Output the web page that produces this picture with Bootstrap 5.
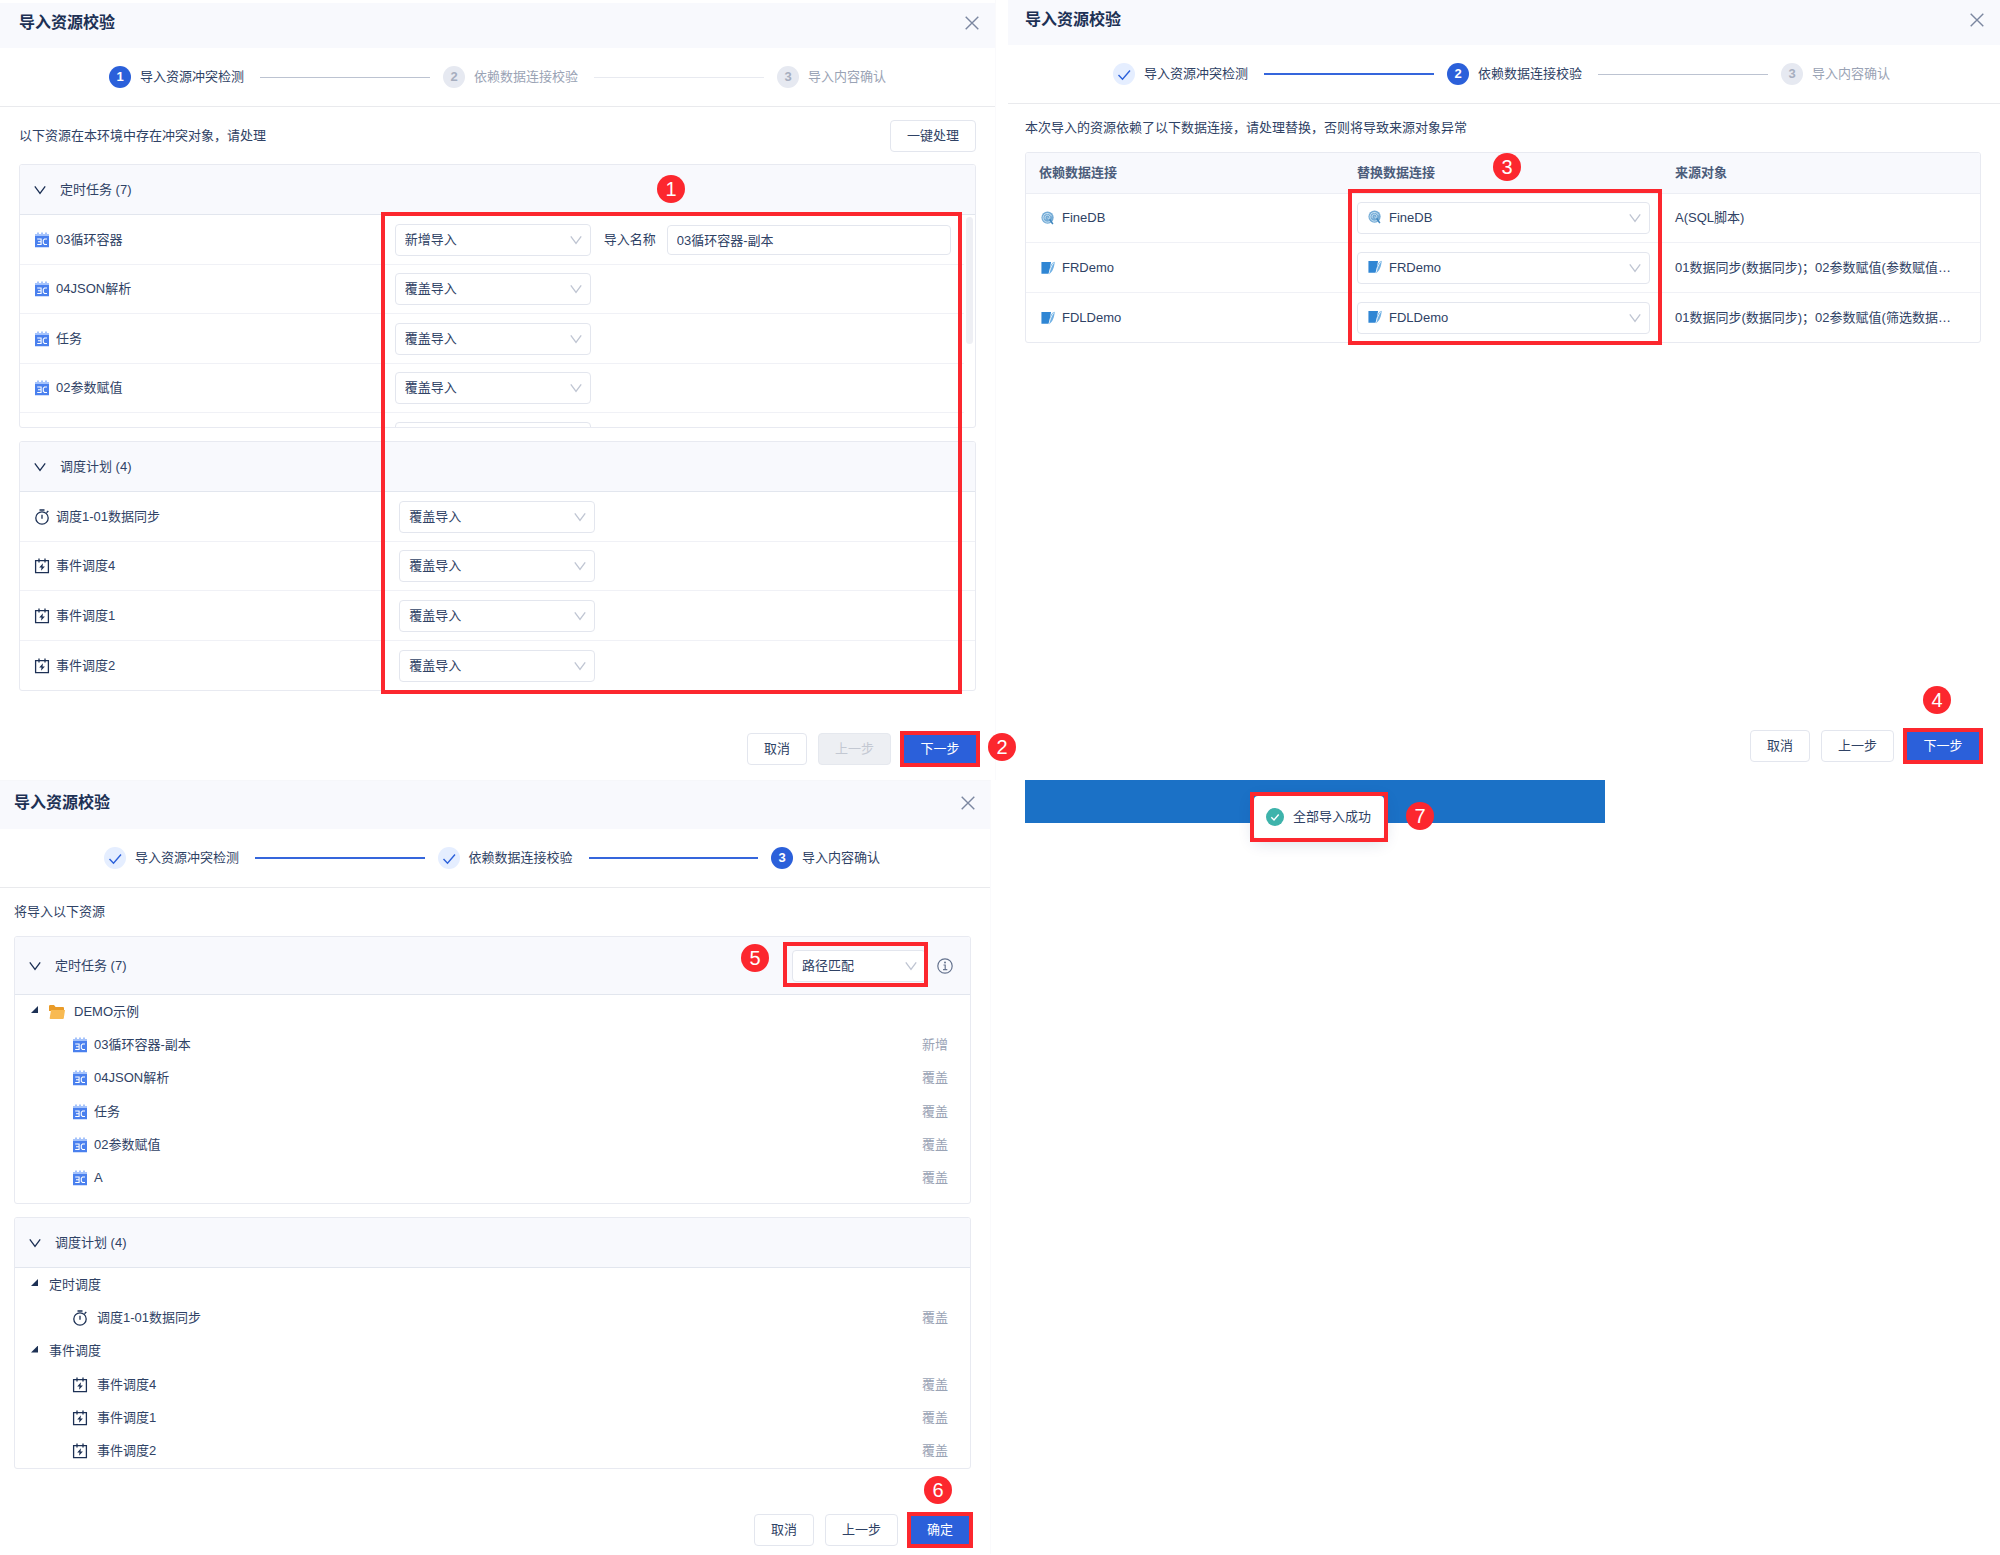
<!DOCTYPE html>
<html lang="zh-CN">
<head>
<meta charset="utf-8">
<meta name="viewport" content="width=device-width, initial-scale=1">
<title>导入资源校验</title>
<link rel="stylesheet" href="https://cdn.jsdelivr.net/npm/bootstrap@5.3.0/dist/css/bootstrap.min.css">
<style>
:root{--ink:#2f4265;--deep:#1d3155;--mute:#9aa3b5;--line:#e8eaf1;--accent:#2b60da;--flag:#fc272e;--tint:#f8f9fd}
body{font-family:"Liberation Sans","Noto Sans CJK SC",sans-serif;font-size:13px;line-height:20px;color:var(--ink);background:#fff}
.board{display:grid;grid-template-columns:1008fr 992fr}
.dialog-a{margin-right:12px;border-right:1px solid #fafafc;--pl:19px;--pr:19px;padding-top:3px}
.dialog-b{--pl:17px;--pr:19px}
.dialog-c{margin-right:17px;border-right:1px solid #fafafc;--pl:14px;--pr:19px;border-top:1px solid #f6f7fa}
.dlg-head{height:45px;background:var(--tint);padding:0 16px 5px var(--pl)}
.dialog-b .dlg-head{padding-right:16px}
.dialog-c .dlg-head{height:48px;padding:3px 15px 7px var(--pl)}
.dlg-title{font-size:16px;font-weight:700;color:var(--deep);margin:0;line-height:20px}
.close-x{border:0;background:none;padding:0;width:14px;height:14px;line-height:0;color:#7b87a0}
.steps{height:59px;border-bottom:1px solid #e9eaed;padding:0 107px 0 109px}
.dialog-b .steps{padding:0 108px 0 105px}
.dialog-c .steps{padding:0 108px 0 104px}
.dot{width:22px;height:22px;border-radius:50%;font-weight:700;line-height:22px;text-align:center;flex:none;background:#e6e9f1;color:#a6aebf}
.dot-on{background:var(--accent);color:#fff}
.dot-ok{background:#e5eeff;color:var(--accent)}
.step-name{width:107px;margin-left:9px;flex:none}
.step-last{width:80px}
.off{color:var(--mute)}
.bar{height:1px;flex:1;margin:0 13px;background:#bcc3d1}
.bar-pale{background:#e8eaf0}
.bar-done{height:2px;background:#3566dc}
.dlg-body{padding:0 var(--pr) 0 var(--pl)}
.box{border:1px solid var(--line);border-radius:3px;background:#fff;overflow:hidden}
.box-head{height:50px;background:var(--tint);border-bottom:1px solid #e2e6ee;padding:0 14px;gap:14px}
.fold{border:0;background:none;padding:0;width:12px;height:12px;line-height:0;color:var(--deep);flex:none}
.line-row{height:50px;border-bottom:1px solid #f0f1f6}
.line-row:nth-child(even){height:49px}
.line-row:last-child{border-bottom:0}
.row-name{flex:0 0 39.7%;padding-left:14px;gap:6px}
.viewport-list{height:212px;overflow:hidden}
.thumb{width:7px;height:127px;border-radius:4px;background:#eeeff4;margin:2px 2px 0}
.pick{appearance:none;width:196px;height:32px;border:1px solid #e3e6ee;border-radius:4px;background:#fff;color:var(--ink);padding:0 28px 0 9px;font-size:13px;line-height:20px;display:block}
.pick-wrap{position:relative}
.pick-wrap .caret{position:absolute;right:9px;top:10px;width:12px;height:12px;color:#bfc5d2;pointer-events:none}
.pick-wrap .lead-ic{position:absolute;left:11px;top:8px;pointer-events:none}
.pick-wide{width:100%;padding-left:31px}
.pick-path{width:134px}
.name-box{height:30px;border:1px solid #e3e6ee;border-radius:4px;color:var(--ink);padding:0 9px;font-size:13px;min-width:0}
.act{height:32px;border:1px solid #e3e6ee;border-radius:4px;background:#fff;color:var(--ink);font-size:13px;line-height:20px;padding:0 16px;min-width:60px}
.act-3{min-width:73px}
.act:disabled{background:#edeff3;color:#c3c8d2;border-color:#e5e8ee;opacity:1}
.act-go{background:var(--accent);border:0;color:#fff;border-radius:0;display:block;min-width:58px}
.act-go.act-3{min-width:72px}
.go-wrap{position:relative;margin-left:2px}
.foot{gap:11px}
.flag-box{position:absolute;border:4px solid var(--flag);pointer-events:none}
.flag-num{position:absolute;width:28px;height:28px;border-radius:50%;background:var(--flag);color:#fff;font-size:20px;line-height:28px;text-align:center}
.go-wrap .flag-box{inset:-2px -4px}
.deps{width:100%;table-layout:fixed;margin:0;border-collapse:separate;border-spacing:0}
.deps th{height:41px;background:var(--tint);color:#4c5d7b;font-weight:700;border-bottom:1px solid #eceef4;padding:0 13px}
.deps td{height:49px;border-bottom:1px solid #f0f1f6;padding:0 13px}
.deps tbody tr:nth-child(even) td{height:50px}
.deps tbody tr:last-child td{border-bottom:0}
.src{gap:7px;padding-left:2px}
.deps .col-pick{padding:0 12px 0 13px}
.tree{list-style:none;margin:0;padding:0}
.tree li{height:33px;display:flex;align-items:center;padding:0 22px 0 57px}
.tree li:nth-child(3n){height:34px}
.tree .branch{padding-left:16px}
.tri{width:7px;height:7px;background:var(--deep);clip-path:polygon(100% 0,100% 100%,0 100%);margin:-4px 11px 0 0;flex:none}
.state{margin-left:auto;color:var(--mute)}
.strip{height:43px;background:#1b71c6;margin-left:17px;width:580px;position:relative}
.toast-ok{position:absolute;left:229px;top:16px;width:130px;height:42px;background:#fff;border-radius:4px;box-shadow:0 4px 16px rgba(20,50,110,.18);gap:9px;padding-left:12px}
.i16{width:16px;height:16px;flex:none}
.ic-near{margin-right:6px}
.ic-far{margin-right:9px}
svg{flex:none}
</style>
<script src="https://cdn.jsdelivr.net/npm/bootstrap@5.3.0/dist/js/bootstrap.bundle.min.js"></script>
</head>
<body>
<svg class="d-none" aria-hidden="true">
  <symbol id="x" viewBox="0 0 14 14"><path d="M.7.7l12.6 12.6M13.3.7L.7 13.3" fill="none" stroke="currentColor" stroke-width="1.4"/></symbol>
  <symbol id="down" viewBox="0 0 12 12"><path d="M.8 2.300L6 9.300l5.200-7" fill="none" stroke="currentColor" stroke-width="1.300"/></symbol>
  <symbol id="tick" viewBox="0 0 22 22"><path d="M5.500 12l4 4.200L17 7.500" fill="none" stroke="currentColor" stroke-width="1.400"/></symbol>
  <symbol id="task" viewBox="0 0 16 16"><path d="M1 2h2V.5h2V2h2V.5h2V2h2V.5h2V2h2v3H1z" fill="#a5c3fb"/><path d="M1 4h14v11.200H1z" fill="#4a80ee"/><path d="M3.200 7h3.900v5.500H3.200M4 9.750h3.100M13 7H10.500L9.300 8.200v3.100l1.200 1.200H13" fill="none" stroke="#fff" stroke-width="1.100"/></symbol>
  <symbol id="clock" viewBox="0 0 16 16"><circle cx="8" cy="9" r="6.200" fill="none" stroke="#1d3155" stroke-width="1.300"/><path d="M5.500 1h5M8 5.800v4M12.500 3.800l1.800-1.800" fill="none" stroke="#1d3155" stroke-width="1.300"/></symbol>
  <symbol id="event" viewBox="0 0 16 16"><path d="M1.600 2.600h12.800v12H1.600z" fill="none" stroke="#1d3155" stroke-width="1.300"/><path d="M5 .5v4M11 .5v4" stroke="#1d3155" stroke-width="1.300"/><path d="M9 5.300L5.200 9.400h2.300L7 12.800l3.900-4.300H8.500z" fill="#1d3155"/></symbol>
  <symbol id="fine" viewBox="0 0 16 16"><circle cx="7.500" cy="7.500" r="7" fill="#74abd6"/><path d="M11.500 10.500A5 5 0 1 1 12 6M5.500 9.500a2.700 2.700 0 1 1 4.500-2.200c0 2-2.500 2.200-2.300.2" fill="none" stroke="#d4e9f7" stroke-width="1"/><path d="M10 9.500l3.500 5.500" stroke="#3f86bd" stroke-width="1.800"/></symbol>
  <symbol id="book" viewBox="0 0 16 16"><path d="M.5 1.200h11L9 14.500H.5z" fill="#2f86d4"/><path d="M15.700.8c-4 1-5.200 5-5.700 9l-1 5.500c4.500-3 6.200-8.500 6.700-14.500z" fill="#6fb0e4"/><path d="M14.500 2C11.800 5.500 10.300 10 9 14.800" fill="none" stroke="#fff" stroke-width=".9"/></symbol>
  <symbol id="folder" viewBox="0 0 16 16"><path d="M0 2.200Q0 1 1.200 1H5l1.600 2H14q1 0 1 1v3H0z" fill="#e99b28"/><path d="M2 6h14l-1.200 8.200q-.1.800-1 .8H1.600Q.500 15 .700 14z" fill="#f8ba52"/></symbol>
  <symbol id="info" viewBox="0 0 16 16"><circle cx="8" cy="8" r="7.200" fill="none" stroke="#66748f" stroke-width="1.200"/><path d="M6.500 7h1.700v4.500M6 11.700h4.300" fill="none" stroke="#66748f" stroke-width="1.200"/><circle cx="8" cy="4.500" r="1" fill="#66748f"/></symbol>
  <symbol id="good" viewBox="0 0 18 18"><circle cx="9" cy="9" r="9" fill="#3eb3ab"/><path d="M5.300 9.200l2.700 2.800 4.700-5.500" fill="none" stroke="#fff" stroke-width="1.400"/></symbol>
</svg>

<main class="board">
  <section class="dialog-a">
    <header class="dlg-head d-flex align-items-center justify-content-between">
      <h1 class="dlg-title">导入资源校验</h1>
      <button class="close-x" type="button" aria-label="关闭"><svg width="14" height="14"><use href="#x"/></svg></button>
    </header>
    <div class="steps d-flex align-items-center">
      <span class="dot dot-on">1</span><span class="step-name">导入资源冲突检测</span><span class="bar"></span>
      <span class="dot">2</span><span class="step-name off">依赖数据连接校验</span><span class="bar bar-pale"></span>
      <span class="dot">3</span><span class="step-name step-last off">导入内容确认</span>
    </div>
    <div class="dlg-body" style="padding-top:13px">
      <div class="d-flex align-items-center justify-content-between" style="margin-bottom:12px">
        <span>以下资源在本环境中存在冲突对象，请处理</span>
        <button class="act" type="button">一键处理</button>
      </div>
      <div class="position-relative">
        <div class="box">
          <div class="box-head d-flex align-items-center"><button class="fold" type="button" aria-label="收起"><svg width="12" height="12"><use href="#down"/></svg></button><span>定时任务 (7)</span></div>
          <div class="viewport-list d-flex">
            <div class="flex-fill">
              <div class="line-row d-flex align-items-center">
                <div class="row-name d-flex align-items-center"><svg class="i16"><use href="#task"/></svg>03循环容器</div>
                <div class="pick-wrap"><select class="pick" aria-label="导入方式"><option>新增导入</option></select><svg class="caret"><use href="#down"/></svg></div>
                <label for="nm" style="margin:0 11px 0 13px">导入名称</label>
                <input id="nm" class="name-box flex-fill" value="03循环容器-副本" style="margin-right:13px">
              </div>
              <div class="line-row d-flex align-items-center">
                <div class="row-name d-flex align-items-center"><svg class="i16"><use href="#task"/></svg>04JSON解析</div>
                <div class="pick-wrap"><select class="pick" aria-label="导入方式"><option>覆盖导入</option></select><svg class="caret"><use href="#down"/></svg></div>
              </div>
              <div class="line-row d-flex align-items-center">
                <div class="row-name d-flex align-items-center"><svg class="i16"><use href="#task"/></svg>任务</div>
                <div class="pick-wrap"><select class="pick" aria-label="导入方式"><option>覆盖导入</option></select><svg class="caret"><use href="#down"/></svg></div>
              </div>
              <div class="line-row d-flex align-items-center">
                <div class="row-name d-flex align-items-center"><svg class="i16"><use href="#task"/></svg>02参数赋值</div>
                <div class="pick-wrap"><select class="pick" aria-label="导入方式"><option>覆盖导入</option></select><svg class="caret"><use href="#down"/></svg></div>
              </div>
              <div class="line-row d-flex align-items-center">
                <div class="row-name"></div>
                <div class="pick-wrap"><select class="pick" aria-label="导入方式"></select></div>
              </div>
            </div>
            <div class="thumb"></div>
          </div>
        </div>
        <div class="box" style="margin-top:13px">
          <div class="box-head d-flex align-items-center"><button class="fold" type="button" aria-label="收起"><svg width="12" height="12"><use href="#down"/></svg></button><span>调度计划 (4)</span></div>
          <div>
            <div class="line-row d-flex align-items-center">
              <div class="row-name d-flex align-items-center"><svg class="i16"><use href="#clock"/></svg>调度1-01数据同步</div>
              <div class="pick-wrap"><select class="pick" aria-label="导入方式"><option>覆盖导入</option></select><svg class="caret"><use href="#down"/></svg></div>
            </div>
            <div class="line-row d-flex align-items-center">
              <div class="row-name d-flex align-items-center"><svg class="i16"><use href="#event"/></svg>事件调度4</div>
              <div class="pick-wrap"><select class="pick" aria-label="导入方式"><option>覆盖导入</option></select><svg class="caret"><use href="#down"/></svg></div>
            </div>
            <div class="line-row d-flex align-items-center">
              <div class="row-name d-flex align-items-center"><svg class="i16"><use href="#event"/></svg>事件调度1</div>
              <div class="pick-wrap"><select class="pick" aria-label="导入方式"><option>覆盖导入</option></select><svg class="caret"><use href="#down"/></svg></div>
            </div>
            <div class="line-row d-flex align-items-center">
              <div class="row-name d-flex align-items-center"><svg class="i16"><use href="#event"/></svg>事件调度2</div>
              <div class="pick-wrap"><select class="pick" aria-label="导入方式"><option>覆盖导入</option></select><svg class="caret"><use href="#down"/></svg></div>
            </div>
          </div>
        </div>
        <div class="flag-box" style="left:362px;right:14px;top:48px;bottom:-3px"></div>
        <span class="flag-num" style="left:638px;top:11px">1</span>
      </div>
      <div class="foot d-flex justify-content-end" style="padding-top:42px;padding-bottom:15px">
        <button class="act" type="button">取消</button>
        <button class="act act-3" type="button" disabled>上一步</button>
        <div class="go-wrap"><button class="act act-3 act-go" type="button">下一步</button><div class="flag-box"></div><span class="flag-num" style="left:84px;top:0">2</span></div>
      </div>
    </div>
  </section>

  <section class="dialog-b d-flex flex-column">
    <header class="dlg-head d-flex align-items-center justify-content-between">
      <h1 class="dlg-title">导入资源校验</h1>
      <button class="close-x" type="button" aria-label="关闭"><svg width="14" height="14"><use href="#x"/></svg></button>
    </header>
    <div class="steps d-flex align-items-center">
      <span class="dot dot-ok"><svg class="d-block" width="22" height="22"><use href="#tick"/></svg></span><span class="step-name">导入资源冲突检测</span><span class="bar bar-done"></span>
      <span class="dot dot-on">2</span><span class="step-name">依赖数据连接校验</span><span class="bar"></span>
      <span class="dot">3</span><span class="step-name step-last off">导入内容确认</span>
    </div>
    <div class="dlg-body flex-fill d-flex flex-column" style="padding-top:14px">
      <span style="margin-bottom:14px">本次导入的资源依赖了以下数据连接，请处理替换，否则将导致来源对象异常</span>
      <div class="position-relative">
        <div class="box">
          <table class="deps">
            <thead><tr><th>依赖数据连接</th><th>替换数据连接</th><th>来源对象</th></tr></thead>
            <tbody>
              <tr><td><div class="src d-flex align-items-center"><svg width="14" height="14"><use href="#fine"/></svg>FineDB</div></td>
                <td class="col-pick"><div class="pick-wrap"><svg class="lead-ic" width="14" height="14"><use href="#fine"/></svg><select class="pick pick-wide" aria-label="替换数据连接"><option>FineDB</option></select><svg class="caret"><use href="#down"/></svg></div></td><td>A(SQL脚本)</td></tr>
              <tr><td><div class="src d-flex align-items-center"><svg width="14" height="14"><use href="#book"/></svg>FRDemo</div></td>
                <td class="col-pick"><div class="pick-wrap"><svg class="lead-ic" width="14" height="14"><use href="#book"/></svg><select class="pick pick-wide" aria-label="替换数据连接"><option>FRDemo</option></select><svg class="caret"><use href="#down"/></svg></div></td><td class="text-nowrap">01数据同步(数据同步)；02参数赋值(参数赋值…</td></tr>
              <tr><td><div class="src d-flex align-items-center"><svg width="14" height="14"><use href="#book"/></svg>FDLDemo</div></td>
                <td class="col-pick"><div class="pick-wrap"><svg class="lead-ic" width="14" height="14"><use href="#book"/></svg><select class="pick pick-wide" aria-label="替换数据连接"><option>FDLDemo</option></select><svg class="caret"><use href="#down"/></svg></div></td><td class="text-nowrap">01数据同步(数据同步)；02参数赋值(筛选数据…</td></tr>
            </tbody>
          </table>
        </div>
        <div class="flag-box" style="left:323px;right:319px;top:37px;bottom:-2px"></div>
        <span class="flag-num" style="left:468px;top:1px">3</span>
      </div>
      <div class="foot d-flex justify-content-end mt-auto" style="padding-bottom:18px;padding-right:2px">
        <button class="act" type="button">取消</button>
        <button class="act act-3" type="button">上一步</button>
        <div class="go-wrap"><button class="act act-3 act-go" type="button">下一步</button><div class="flag-box"></div><span class="flag-num" style="left:16px;top:-44px">4</span></div>
      </div>
    </div>
  </section>

  <section class="dialog-c">
    <header class="dlg-head d-flex align-items-center justify-content-between">
      <h1 class="dlg-title">导入资源校验</h1>
      <button class="close-x" type="button" aria-label="关闭"><svg width="14" height="14"><use href="#x"/></svg></button>
    </header>
    <div class="steps d-flex align-items-center">
      <span class="dot dot-ok"><svg class="d-block" width="22" height="22"><use href="#tick"/></svg></span><span class="step-name">导入资源冲突检测</span><span class="bar bar-done"></span>
      <span class="dot dot-ok"><svg class="d-block" width="22" height="22"><use href="#tick"/></svg></span><span class="step-name">依赖数据连接校验</span><span class="bar bar-done"></span>
      <span class="dot dot-on">3</span><span class="step-name step-last">导入内容确认</span>
    </div>
    <div class="dlg-body" style="padding-top:14px">
      <div style="margin-bottom:14px">将导入以下资源</div>
      <div class="box" style="padding-bottom:8px">
        <div class="box-head d-flex align-items-center" style="height:58px;padding-right:17px">
          <button class="fold" type="button" aria-label="收起"><svg width="12" height="12"><use href="#down"/></svg></button><span>定时任务 (7)</span>
          <div class="pick-wrap ms-auto"><select class="pick pick-path" aria-label="匹配方式"><option>路径匹配</option></select><svg class="caret"><use href="#down"/></svg>
            <div class="flag-box" style="inset:-8px -2px -5px -9px"></div><span class="flag-num" style="left:-51px;top:-6px">5</span></div>
          <svg class="i16" style="margin-left:-3px"><use href="#info"/></svg>
        </div>
        <ul class="tree">
          <li class="branch"><i class="tri"></i><svg class="i16 ic-far"><use href="#folder"/></svg>DEMO示例</li>
          <li><svg class="i16 ic-near"><use href="#task"/></svg>03循环容器-副本<span class="state">新增</span></li>
          <li><svg class="i16 ic-near"><use href="#task"/></svg>04JSON解析<span class="state">覆盖</span></li>
          <li><svg class="i16 ic-near"><use href="#task"/></svg>任务<span class="state">覆盖</span></li>
          <li><svg class="i16 ic-near"><use href="#task"/></svg>02参数赋值<span class="state">覆盖</span></li>
          <li><svg class="i16 ic-near"><use href="#task"/></svg>A<span class="state">覆盖</span></li>
        </ul>
      </div>
      <div class="box" style="margin-top:13px">
        <div class="box-head d-flex align-items-center"><button class="fold" type="button" aria-label="收起"><svg width="12" height="12"><use href="#down"/></svg></button><span>调度计划 (4)</span></div>
        <ul class="tree">
          <li class="branch"><i class="tri"></i>定时调度</li>
          <li><svg class="i16 ic-far"><use href="#clock"/></svg>调度1-01数据同步<span class="state">覆盖</span></li>
          <li class="branch"><i class="tri"></i>事件调度</li>
          <li><svg class="i16 ic-far"><use href="#event"/></svg>事件调度4<span class="state">覆盖</span></li>
          <li><svg class="i16 ic-far"><use href="#event"/></svg>事件调度1<span class="state">覆盖</span></li>
          <li><svg class="i16 ic-far"><use href="#event"/></svg>事件调度2<span class="state">覆盖</span></li>
        </ul>
      </div>
      <div class="foot d-flex justify-content-end" style="padding-top:45px;padding-bottom:8px;padding-right:2px">
        <button class="act" type="button">取消</button>
        <button class="act act-3" type="button">上一步</button>
        <div class="go-wrap"><button class="act act-go" type="button">确定</button><div class="flag-box"></div><span class="flag-num" style="left:13px;top:-38px">6</span></div>
      </div>
    </div>
  </section>

  <section>
    <div class="strip">
      <div class="toast-ok d-flex align-items-center" role="status"><svg width="18" height="18"><use href="#good"/></svg>全部导入成功<div class="flag-box" style="inset:-4px"></div></div>
      <span class="flag-num" style="left:381px;top:22px">7</span>
    </div>
  </section>
</main>
</body>
</html>
